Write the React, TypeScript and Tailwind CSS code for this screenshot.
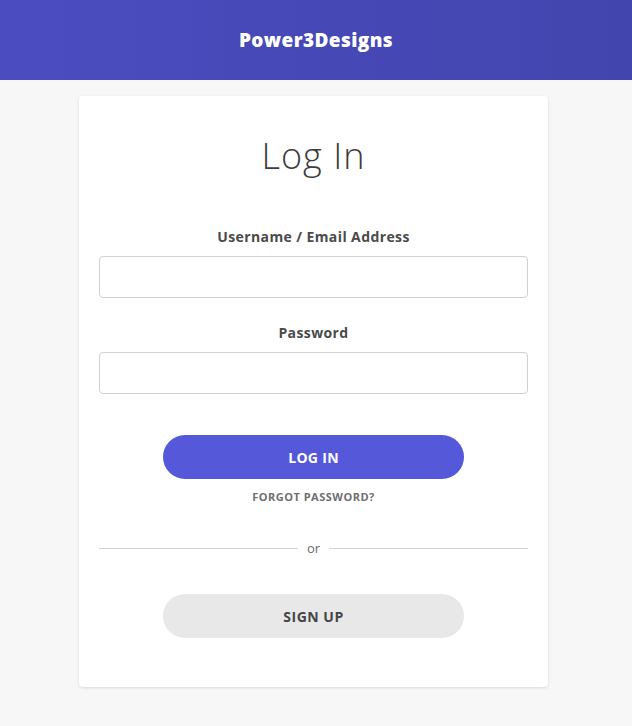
import { useState } from "react";

const font = { fontFamily: '"Open Sans", "DejaVu Sans", sans-serif' };

const Field = ({ label, type }: { label: string; type: string }) => {
  const [value, setValue] = useState("");
  return (
    <div className="flex flex-col items-center">
      <label className="text-[14px] font-bold text-[#4a4a4a] leading-[20px] tracking-[0.4px] mb-[9px]">
        {label}
      </label>
      <input
        type={type}
        value={value}
        onChange={(e) => setValue(e.target.value)}
        className="w-full h-[42px] rounded-[4px] border border-[#cfd0d8] bg-white px-3 text-sm outline-none"
      />
    </div>
  );
};

export default function App() {
  return (
    <div className="min-h-[726px] bg-[#f7f7f7]" style={font}>
      {/* header */}
      <header className="h-[80px] flex items-center justify-center bg-gradient-to-r from-[#4b4cc0] to-[#4345ae]">
        <h1 className="text-white text-[19px] font-extrabold tracking-[0.4px]">Power3Designs</h1>
      </header>

      {/* card */}
      <div className="pt-4 pb-8">
        <div className="ml-[79px] w-[469px] bg-white rounded-[4px] shadow-[0_1px_3px_rgba(0,0,0,0.12)] px-5 pt-[36px] pb-[49px]">
          <h2 className="text-center text-[36px] font-light text-[#3d3d3d] leading-[48px] tracking-[1px]">
            Log In
          </h2>

          <div className="mt-[47px] flex flex-col gap-[25px]">
            <Field label="Username / Email Address" type="text" />
            <Field label="Password" type="password" />
          </div>

          <div className="mt-[41px] flex flex-col items-center">
            <button className="w-[301px] h-[44px] rounded-full bg-[#5558d9] text-white text-[14px] font-bold tracking-[0.3px]">
              LOG IN
            </button>
            <a href="#" className="mt-[11px] text-[11px] font-bold text-[#6f6f6f] tracking-[0.5px] leading-[14px]">
              FORGOT PASSWORD?
            </a>
          </div>

          <div className="mt-[36px] flex items-center gap-[9px]">
            <div className="flex-1 h-px bg-[#cfd3de]" />
            <span className="text-[13px] text-[#6b6b6b] leading-[16px]">or</span>
            <div className="flex-1 h-px bg-[#cfd3de]" />
          </div>

          <div className="mt-[38px] flex justify-center">
            <button className="w-[301px] h-[44px] rounded-full bg-[#e8e8e8] text-[#454545] text-[14px] font-bold tracking-[0.5px]">
              SIGN UP
            </button>
          </div>
        </div>
      </div>
    </div>
  );
}
